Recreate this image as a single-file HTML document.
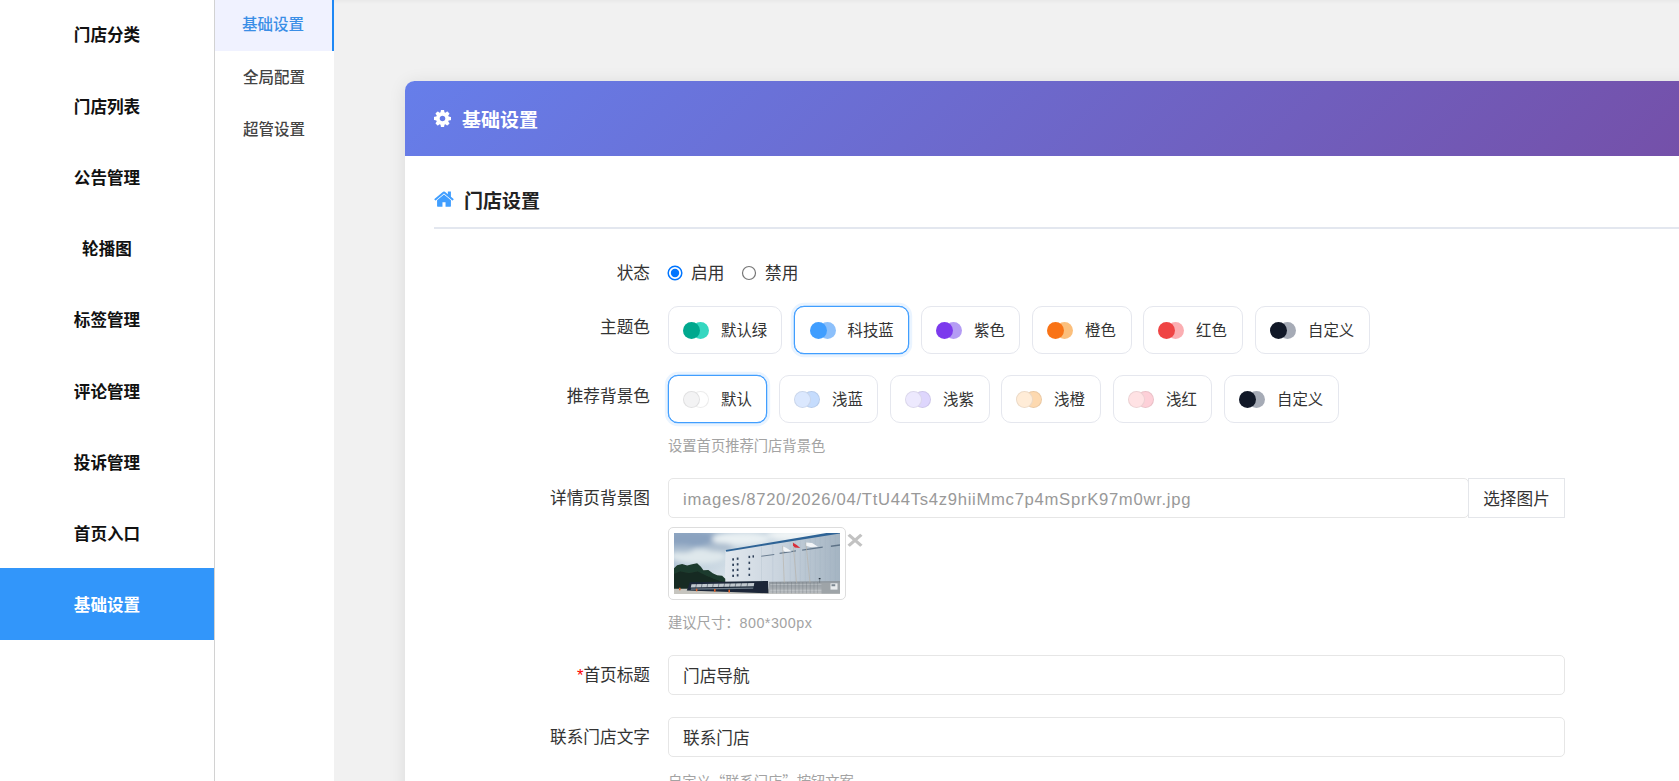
<!DOCTYPE html>
<html lang="zh-CN">
<head>
<meta charset="utf-8">
<title>基础设置</title>
<style>
*{box-sizing:border-box;margin:0;padding:0}
html,body{width:1679px;height:781px;overflow:hidden}
body{font-family:"Liberation Sans","Noto Sans CJK SC",sans-serif;background:#f1f1f1;color:#333;position:relative;font-size:16.67px}
.side{position:absolute;left:0;top:0;width:215px;height:781px;background:#fff;border-right:1px solid #d2d2d2}
.side a{display:block;position:absolute;left:0;width:214px;height:72px;line-height:75px;text-align:center;font-size:16.6px;font-weight:700;color:#111;text-decoration:none}
.side a.on{background:#3296fa;color:#fff}
.sub{position:absolute;left:215px;top:0;width:119px;height:781px;background:#fff}
.sub a{display:block;position:absolute;left:0;width:119px;height:52px;line-height:52px;text-align:center;font-size:15.5px;color:#444;padding-right:1px;text-decoration:none;font-weight:500}
.sub a.on{background:#f0f2ff;color:#3a8ee6;border-right:2px solid #1e88f5;height:51px}
.topshadow{position:absolute;left:334px;top:0;width:1345px;height:4px;background:linear-gradient(#e9e9e9,#f1f1f1)}
.card{position:absolute;left:405px;top:81px;width:1421px;height:760px;background:#fff;border-radius:9.5px 9.5px 0 0;box-shadow:0 2px 18px rgba(0,0,0,.09);overflow:hidden}
.chead{position:absolute;left:0;top:0;width:100%;height:75px;background:linear-gradient(135deg,#667eea 0%,#764ba2 100%)}
.chead h1{position:absolute;left:57px;top:1px;line-height:77px;font-size:19px;font-weight:700;color:#fff}
.chead svg{position:absolute;left:29px;top:29px}
.sec{position:absolute;left:29px;top:100px;width:1380px;height:48px;border-bottom:2px solid #e3e7ef}
.sec h2{position:absolute;left:30px;top:1px;line-height:40px;font-size:19px;font-weight:700;color:#222}
.sec svg{position:absolute;left:0;top:10px}
.lab{position:absolute;width:240px;text-align:right;font-size:16.67px;color:#333;line-height:24px}

.rsvg{position:absolute}
.rt{position:absolute;font-size:16.67px;line-height:24px;color:#333}
.chip{position:absolute;height:48px;border:1px solid #e5e7ee;border-radius:10px;background:#fff;font-size:15.4px;color:#333;line-height:48px;padding-left:52px;white-space:nowrap}
.chip.on{border-color:#409eff;box-shadow:0 0 0 .25px #409eff,0 0 0 3.2px rgba(64,158,255,.11)}
.chip i{position:absolute;top:14.5px;width:17px;height:17px;border-radius:50%}
.chip i.a{left:14px;z-index:2}
.chip i.b{left:22.8px;z-index:1}
.chip.lt i{border:1px solid rgba(0,0,0,.075)}
.help{position:absolute;left:263px;font-size:14.3px;color:#a3a3a3;line-height:20px;white-space:nowrap}
.inp{position:absolute;left:263px;height:40px;border:1px solid #e6e6e6;border-radius:5px;background:#fff;font-size:16.67px;line-height:38px;padding-left:14px;color:#333;white-space:nowrap;overflow:hidden}
.btn{position:absolute;left:1063px;top:397px;width:97px;height:40px;border:1px solid #e4e6ea;background:#fff;font-size:16.67px;line-height:41.5px;text-align:center;color:#333}
.thumb{position:absolute;left:263px;top:446px;width:178px;height:73px;border:1px solid #ddd;border-radius:5px;background:#fff;padding:5px}
.thumb svg{display:block}
.close{position:absolute;left:440px;top:444px;width:20px;height:30px;line-height:30px;text-align:center;font-size:25px;font-weight:700;color:#c2c2c2;transform:scaleX(1.2);transform-origin:50% 50%}
.req{color:#f00}
</style>
</head>
<body>
<div class="side">
<a style="top:-2px">门店分类</a>
<a style="top:70px">门店列表</a>
<a style="top:141px">公告管理</a>
<a style="top:212px">轮播图</a>
<a style="top:283px">标签管理</a>
<a style="top:355px">评论管理</a>
<a style="top:426px">投诉管理</a>
<a style="top:497px">首页入口</a>
<a class="on" style="top:568px">基础设置</a>
</div>
<div class="sub">
<a class="on" style="top:0;line-height:50px">基础设置</a>
<a style="top:52px">全局配置</a>
<a style="top:104px">超管设置</a>
</div>
<div class="topshadow"></div>
<div class="card">
<div class="chead"><svg width="17" height="17" viewBox="128 128 1536 1536"><path fill="#fff" d="M1152 896q0-106-75-181t-181-75-181 75-75 181 75 181 181 75 181-75 75-181zm512-109v222q0 12-8 23t-20 13l-185 28q-19 54-39 91 35 50 107 138 10 12 10 25t-9 23q-27 37-99 108t-94 71q-12 0-26-9l-138-108q-44 23-91 38-16 136-29 186-7 28-36 28h-222q-14 0-24.500-8.500t-11.500-21.500l-28-184q-49-16-90-37l-141 107q-10 9-25 9-14 0-25-11-126-114-165-168-7-10-7-23 0-12 8-23 15-21 51-66.500t54-70.500q-27-50-41-99l-183-27q-13-2-21-12.500t-8-23.500v-222q0-12 8-23t19-13l186-28q14-46 39-92-40-57-107-138-10-12-10-24 0-10 9-23 26-36 98.500-107.500t94.500-71.500q13 0 26 10l138 107q44-23 91-38 16-136 29-186 7-28 36-28h222q14 0 24.500 8.500t11.500 21.500l28 184q49 16 90 37l142-107q9-9 24-9 13 0 25 10 129 119 165 170 7 8 7 22 0 12-8 23-15 21-51 66.500t-54 70.500q26 50 41 98l183 28q13 2 21 12.500t8 23.500z"/></svg><h1>基础设置</h1></div>
<div class="sec"><svg width="20" height="16" viewBox="64 220 1664 1330" preserveAspectRatio="none"><path fill="#409eff" d="M1472 992v480q0 26-19 45t-45 19h-384v-384h-256v384h-384q-26 0-45-19t-19-45v-480q0-1 .5-3t.5-3l575-474 575 474q1 2 1 6zm223-69l-62 74q-8 9-21 11h-3q-13 0-21-7l-692-577-692 577q-12 8-24 7-13-2-21-11l-62-74q-8-10-7-23.500t11-21.500l719-599q32-26 76-26t76 26l244 204v-195q0-14 9-23t23-9h192q14 0 23 9t9 23v408l219 182q10 8 11 21.500t-7 23.500z"/></svg><h2>门店设置</h2></div>
<div class="lab" style="left:5px;top:181px">状态</div>
<svg class="rsvg" style="left:262px;top:184px" width="16" height="16" viewBox="0 0 16 16"><circle cx="8" cy="8" r="6.8" fill="#fff" stroke="#0075ff" stroke-width="1.5"/><circle cx="8" cy="8" r="4.2" fill="#0075ff"/></svg><span class="rt" style="left:286px;top:181px">启用</span>
<svg class="rsvg" style="left:335.7px;top:184px" width="16" height="16" viewBox="0 0 16 16"><circle cx="8" cy="8" r="6.5" fill="#fff" stroke="#767676" stroke-width="1.2"/></svg><span class="rt" style="left:360px;top:181px">禁用</span>

<div class="lab" style="left:5px;top:235px">主题色</div>
<div class="chip w3" style="left:263px;top:225px;width:114px"><i class="a" style="background:#00a88e"></i><i class="b" style="background:#35d7c0"></i>默认绿</div>
<div class="chip w3 on" style="left:389px;top:225px;width:115px;padding-left:52.5px"><i class="a" style="background:#409eff;left:15px"></i><i class="b" style="background:#8cc0fb;left:23.8px"></i>科技蓝</div>
<div class="chip w2" style="left:516px;top:225px;width:99px"><i class="a" style="background:#7c3aed"></i><i class="b" style="background:#b49cf4"></i>紫色</div>
<div class="chip w2" style="left:627px;top:225px;width:100px"><i class="a" style="background:#f97316"></i><i class="b" style="background:#fbbf7c"></i>橙色</div>
<div class="chip w2" style="left:738px;top:225px;width:100px"><i class="a" style="background:#ef4444"></i><i class="b" style="background:#fbaeb2"></i>红色</div>
<div class="chip w3" style="left:850px;top:225px;width:115px"><i class="a" style="background:#111827"></i><i class="b" style="background:#a6abb6"></i>自定义</div>

<div class="lab" style="left:5px;top:304px">推荐背景色</div>
<div class="chip w2 lt on" style="left:263px;top:294px;width:99px"><i class="a" style="background:#f3f3f4"></i><i class="b" style="background:#ffffff"></i>默认</div>
<div class="chip w2 lt" style="left:374px;top:294px;width:99px"><i class="a" style="background:#dbe8fe"></i><i class="b" style="background:#c5dcfd"></i>浅蓝</div>
<div class="chip w2 lt" style="left:485px;top:294px;width:100px"><i class="a" style="background:#ede9fe"></i><i class="b" style="background:#ded6fd"></i>浅紫</div>
<div class="chip w2 lt" style="left:596px;top:294px;width:100px"><i class="a" style="background:#ffecd7"></i><i class="b" style="background:#fdd9b0"></i>浅橙</div>
<div class="chip w2 lt" style="left:708px;top:294px;width:99px"><i class="a" style="background:#ffe2e4"></i><i class="b" style="background:#fdd0d8"></i>浅红</div>
<div class="chip w3" style="left:819px;top:294px;width:115px"><i class="a" style="background:#111827"></i><i class="b" style="background:#a6abb6"></i>自定义</div>
<div class="help" style="top:355px">设置首页推荐门店背景色</div>

<div class="lab" style="left:5px;top:406px">详情页背景图</div>
<div class="inp" style="top:397px;width:800.6px;color:#999;letter-spacing:.7px;line-height:41px">images/8720/2026/04/TtU44Ts4z9hiiMmc7p4mSprK97m0wr.jpg</div>
<div class="btn">选择图片</div>
<div class="thumb"><svg width="166" height="61" viewBox="110 103 1328 487" preserveAspectRatio="none">
<defs>
<linearGradient id="sky" x1="0" y1="0" x2="1" y2="0.6"><stop offset="0" stop-color="#8ea7c3"/><stop offset=".35" stop-color="#c3d2de"/><stop offset=".7" stop-color="#e6edf1"/><stop offset="1" stop-color="#eef2f4"/></linearGradient>
<linearGradient id="bld" x1="0" y1="0" x2="1" y2="0"><stop offset="0" stop-color="#e2e8ee"/><stop offset=".45" stop-color="#cbd5df"/><stop offset="1" stop-color="#a4b4c2"/></linearGradient>
<linearGradient id="fen" x1="0" y1="0" x2="0" y2="1"><stop offset="0" stop-color="#8d959c"/><stop offset="1" stop-color="#b9bdc0"/></linearGradient>
<filter id="bl" x="-5%" y="-5%" width="110%" height="110%"><feGaussianBlur stdDeviation="3.2"/></filter>
<filter id="bl2" x="-20%" y="-20%" width="140%" height="140%"><feGaussianBlur stdDeviation="22"/></filter>
<clipPath id="cp"><rect x="110" y="103" width="1328" height="487"/></clipPath>
</defs>
<g clip-path="url(#cp)">
<rect x="110" y="103" width="1328" height="487" fill="url(#sky)"/>
<g filter="url(#bl2)">
<ellipse cx="260" cy="150" rx="230" ry="60" fill="#8aa2bf"/>
<ellipse cx="640" cy="150" rx="230" ry="50" fill="#e9f0f3"/>
<ellipse cx="300" cy="290" rx="220" ry="60" fill="#dfe8ec"/>
<ellipse cx="470" cy="215" rx="120" ry="35" fill="#aebfd0"/>
<ellipse cx="1150" cy="120" rx="300" ry="40" fill="#f1f5f6"/>
<ellipse cx="180" cy="230" rx="90" ry="30" fill="#a9bccf"/>
</g>
<g filter="url(#bl)">
<polygon points="522,246 1438,92 1438,505 516,492" fill="url(#bld)"/>
<polygon points="524,238 1330,103 1400,103 1438,96 1438,106 528,252" fill="#2f6496"/>
<g stroke="#94a6b6" stroke-width="3" opacity=".5">
<line x1="1120" y1="160" x2="1120" y2="495"/><line x1="1160" y1="152" x2="1160" y2="495"/><line x1="1200" y1="146" x2="1200" y2="495"/><line x1="1240" y1="140" x2="1240" y2="495"/><line x1="1280" y1="133" x2="1280" y2="495"/><line x1="1320" y1="126" x2="1320" y2="495"/><line x1="1360" y1="120" x2="1360" y2="495"/><line x1="1400" y1="113" x2="1400" y2="495"/><line x1="1080" y1="166" x2="1080" y2="495"/><line x1="1040" y1="172" x2="1040" y2="495"/><line x1="900" y1="195" x2="900" y2="495"/><line x1="810" y1="210" x2="810" y2="495"/>
</g>
<g fill="#2e3f58">
<rect x="576" y="305" width="14" height="18"/><rect x="612" y="299" width="14" height="18"/>
<rect x="576" y="348" width="14" height="18"/><rect x="612" y="344" width="14" height="18"/>
<rect x="576" y="392" width="14" height="18"/><rect x="612" y="388" width="14" height="18"/>
<rect x="576" y="436" width="14" height="18"/><rect x="612" y="432" width="14" height="18"/>
<rect x="706" y="285" width="13" height="18"/><rect x="738" y="281" width="12" height="18"/>
<rect x="706" y="332" width="13" height="18"/>
<rect x="706" y="380" width="13" height="18"/>
<rect x="706" y="428" width="13" height="18"/>
</g>
<g fill="#3f566e" opacity=".7">
<polygon points="808,284 912,270 912,278 808,292"/>
<polygon points="955,260 1085,241 1085,251 955,270"/>
<polygon points="1135,234 1300,210 1300,221 1135,244"/>
<polygon points="1365,203 1438,193 1438,204 1365,214"/>
</g>
<path d="M110,385 L135,360 L175,350 L215,362 L255,352 L295,345 L325,372 L345,400 L385,398 L420,425 L455,440 L495,445 L520,468 L520,565 L110,565 Z" fill="#1f3a2d"/>
<path d="M110,430 L160,410 L230,425 L300,410 L360,440 L430,470 L520,500 L520,565 L110,565 Z" fill="#142a22"/>
<rect x="110" y="548" width="1328" height="42" fill="#c6c5bf"/>
<polygon points="868,493 1438,486 1438,586 868,586" fill="url(#fen)"/>
<g stroke="#e3e6e8" stroke-width="4" opacity=".8">
<line x1="880" y1="515" x2="1300" y2="512"/><line x1="880" y1="560" x2="1300" y2="560"/>
</g>
<g stroke="#5f676e" stroke-width="3" opacity=".7">
<line x1="900" y1="495" x2="900" y2="585"/><line x1="930" y1="495" x2="930" y2="585"/><line x1="960" y1="495" x2="960" y2="585"/><line x1="990" y1="495" x2="990" y2="585"/><line x1="1020" y1="495" x2="1020" y2="585"/><line x1="1050" y1="495" x2="1050" y2="585"/><line x1="1080" y1="495" x2="1080" y2="585"/><line x1="1110" y1="495" x2="1110" y2="585"/><line x1="1140" y1="495" x2="1140" y2="585"/><line x1="1170" y1="495" x2="1170" y2="585"/><line x1="1200" y1="495" x2="1200" y2="585"/><line x1="1230" y1="495" x2="1230" y2="585"/><line x1="1260" y1="495" x2="1260" y2="585"/>
</g>
<rect x="1290" y="500" width="148" height="86" fill="#9ea4a8"/>
<rect x="1362" y="505" width="56" height="50" fill="#e9ecee"/>
<rect x="1370" y="512" width="30" height="16" fill="#7b8791"/>
<polygon points="236,496 862,486 866,584 212,562" fill="#1a2838"/>
<polygon points="250,512 752,503 748,528 244,538" fill="#dfe5ea" opacity=".85"/>
<polygon points="246,546 745,538 743,548 244,556" fill="#93a0ad" opacity=".7"/>
<g stroke="#1a2838" stroke-width="5" opacity=".75">
<line x1="290" y1="508" x2="284" y2="540"/><line x1="335" y1="507" x2="329" y2="539"/><line x1="380" y1="506" x2="374" y2="538"/><line x1="425" y1="505" x2="419" y2="537"/><line x1="470" y1="505" x2="464" y2="536"/><line x1="515" y1="504" x2="509" y2="535"/><line x1="560" y1="503" x2="554" y2="534"/><line x1="605" y1="502" x2="599" y2="533"/><line x1="650" y1="502" x2="644" y2="532"/><line x1="700" y1="501" x2="694" y2="531"/>
</g>
<g stroke="#b9b2a6" stroke-width="5">
<line x1="980" y1="205" x2="992" y2="500"/><line x1="1062" y1="175" x2="1090" y2="500"/><line x1="1165" y1="180" x2="1198" y2="500"/>
</g>
<polygon points="984,210 1010,222 1052,250 1000,252 984,240" fill="#f4f6f8"/>
<polygon points="1062,180 1092,198 1120,222 1075,218 1062,200" fill="#d92f3a"/>
<polygon points="1168,178 1215,182 1262,212 1200,214 1168,204" fill="#f4f6f8"/>
<g fill="#e0642a"><rect x="150" y="540" width="12" height="20"/><rect x="285" y="548" width="12" height="20"/><rect x="430" y="550" width="13" height="22"/><rect x="545" y="556" width="13" height="22"/></g>
<rect x="1268" y="462" width="14" height="10" fill="#2a3642"/><line x1="1275" y1="470" x2="1275" y2="500" stroke="#59626b" stroke-width="4"/>
</g>
</g>
</svg></div>
<span class="close">×</span>
<div class="help" style="top:532px">建议尺寸：<span style="letter-spacing:.5px">800*300px</span></div>

<div class="lab" style="left:5px;top:583px"><span class="req">*</span>首页标题</div>
<div class="inp" style="top:574px;width:897px;line-height:42px">门店导航</div>
<div class="lab" style="left:5px;top:645px">联系门店文字</div>
<div class="inp" style="top:636px;width:897px;line-height:42px">联系门店</div>
<div class="help" style="top:690px;font-family:'Noto Sans CJK SC',sans-serif">自定义“联系门店”按钮文案</div>

</div>
</body>
</html>
